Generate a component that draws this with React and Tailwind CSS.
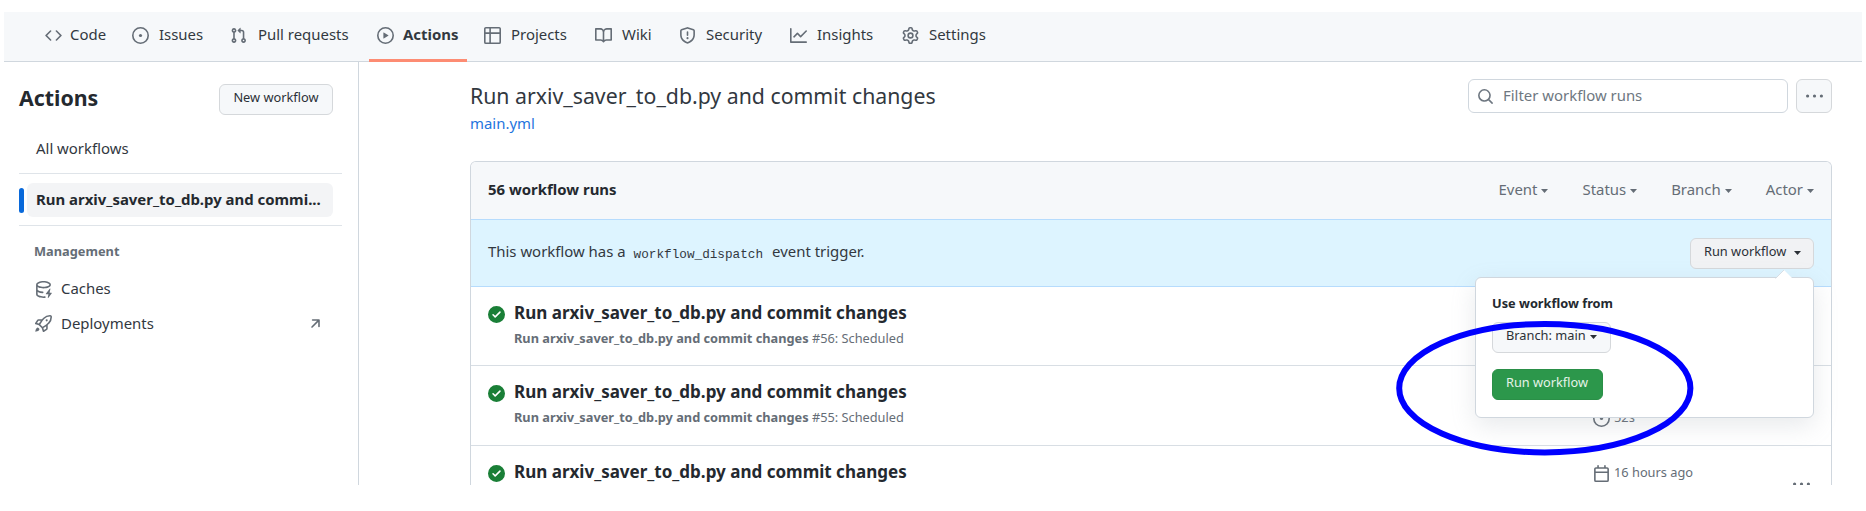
import React from "react";

const PATHS = {
  code: ["m11.28 3.22 4.25 4.25a.75.75 0 0 1 0 1.06l-4.25 4.25a.749.749 0 0 1-1.275-.326.749.749 0 0 1 .215-.734L13.94 8l-3.72-3.72a.749.749 0 0 1 .326-1.275.749.749 0 0 1 .734.215Zm-6.56 0a.751.751 0 0 1 1.042.018.751.751 0 0 1 .018 1.042L2.06 8l3.72 3.72a.749.749 0 0 1-.326 1.275.749.749 0 0 1-.734-.215L.47 8.53a.75.75 0 0 1 0-1.06Z"],
  issue: [
    "M8 9.5a1.5 1.5 0 1 0 0-3 1.5 1.5 0 0 0 0 3Z",
    "M8 0a8 8 0 1 1 0 16A8 8 0 0 1 8 0ZM1.5 8a6.5 6.5 0 1 0 13 0 6.5 6.5 0 0 0-13 0Z",
  ],
  pull: ["M1.5 3.25a2.25 2.25 0 1 1 3 2.122v5.256a2.251 2.251 0 1 1-1.5 0V5.372A2.25 2.25 0 0 1 1.5 3.25Zm5.677-.177L9.573.677A.25.25 0 0 1 10 .854V2.5h1A2.5 2.5 0 0 1 13.5 5v5.628a2.251 2.251 0 1 1-1.5 0V5a1 1 0 0 0-1-1h-1v1.646a.25.25 0 0 1-.427.177L7.177 3.427a.25.25 0 0 1 0-.354ZM3.75 2.5a.75.75 0 1 0 0 1.5.75.75 0 0 0 0-1.5Zm0 9.5a.75.75 0 1 0 0 1.5.75.75 0 0 0 0-1.5Zm8.25.75a.75.75 0 1 0 1.5 0 .75.75 0 0 0-1.5 0Z"],
  play: ["M8 0a8 8 0 1 1 0 16A8 8 0 0 1 8 0ZM1.5 8a6.5 6.5 0 1 0 13 0 6.5 6.5 0 0 0-13 0Zm4.879-2.773 4.264 2.559a.25.25 0 0 1 0 .428l-4.264 2.559A.25.25 0 0 1 6 10.559V5.442a.25.25 0 0 1 .379-.215Z"],
  table: ["M0 1.75C0 .784.784 0 1.75 0h12.5C15.216 0 16 .784 16 1.75v12.5A1.75 1.75 0 0 1 14.25 16H1.75A1.75 1.75 0 0 1 0 14.25ZM6.5 6.5v8h7.75a.25.25 0 0 0 .25-.25V6.5Zm8-1.5V1.75a.25.25 0 0 0-.25-.25H6.5V5Zm-13 1.5v7.75c0 .138.112.25.25.25H5v-8ZM5 5V1.5H1.75a.25.25 0 0 0-.25.25V5Z"],
  book: ["M0 1.75A.75.75 0 0 1 .75 1h4.253c1.227 0 2.317.59 3 1.501A3.743 3.743 0 0 1 11.006 1h4.245a.75.75 0 0 1 .75.75v10.5a.75.75 0 0 1-.75.75h-4.507a2.25 2.25 0 0 0-1.591.659l-.622.621a.75.75 0 0 1-1.06 0l-.622-.621A2.25 2.25 0 0 0 5.258 13H.75a.75.75 0 0 1-.75-.75Zm7.251 10.324.004-5.073-.002-2.253A2.25 2.25 0 0 0 5.003 2.5H1.5v9h3.757a3.75 3.75 0 0 1 1.994.574ZM8.755 4.75l-.004 7.322a3.752 3.752 0 0 1 1.992-.572H14.5v-9h-3.495a2.25 2.25 0 0 0-2.25 2.25Z"],
  shield: ["M7.467.133a1.748 1.748 0 0 1 1.066 0l5.25 1.68A1.75 1.75 0 0 1 15 3.48V7c0 1.566-.32 3.182-1.303 4.682-.983 1.498-2.585 2.813-5.032 3.855a1.697 1.697 0 0 1-1.33 0c-2.447-1.042-4.049-2.357-5.032-3.855C1.32 10.182 1 8.566 1 7V3.48a1.75 1.75 0 0 1 1.217-1.667Zm.61 1.429a.25.25 0 0 0-.153 0l-5.25 1.68a.25.25 0 0 0-.174.238V7c0 1.358.275 2.666 1.057 3.86.784 1.194 2.121 2.34 4.366 3.297a.196.196 0 0 0 .154 0c2.245-.956 3.582-2.104 4.366-3.298C13.225 9.666 13.5 8.36 13.5 7V3.48a.251.251 0 0 0-.174-.237l-5.25-1.68ZM8.75 4.75v3a.75.75 0 0 1-1.5 0v-3a.75.75 0 0 1 1.5 0ZM9 10.5a1 1 0 1 1-2 0 1 1 0 0 1 2 0Z"],
  graph: ["M1.5 1.75V13.5h13.75a.75.75 0 0 1 0 1.5H.75a.75.75 0 0 1-.75-.75V1.75a.75.75 0 0 1 1.5 0Zm14.28 2.53-5.25 5.25a.75.75 0 0 1-1.06 0L7 7.06 4.28 9.78a.751.751 0 0 1-1.042-.018.751.751 0 0 1-.018-1.042l3.25-3.25a.75.75 0 0 1 1.06 0L10 7.94l4.72-4.72a.751.751 0 0 1 1.042.018.751.751 0 0 1 .018 1.042Z"],
  gear: ["M8 0a8.2 8.2 0 0 1 .701.031C9.444.095 9.99.645 10.16 1.29l.288 1.107c.018.066.079.158.212.224.231.114.454.243.668.386.123.082.233.09.299.071l1.103-.303c.644-.176 1.392.021 1.82.63.27.385.506.792.704 1.218.315.675.111 1.422-.364 1.891l-.814.806c-.049.048-.098.147-.088.294.016.257.016.515 0 .772-.01.147.038.246.088.294l.814.806c.475.469.679 1.216.364 1.891a7.977 7.977 0 0 1-.704 1.217c-.428.61-1.176.807-1.82.63l-1.102-.302c-.067-.019-.177-.011-.3.071a5.909 5.909 0 0 1-.668.386c-.133.066-.194.158-.211.224l-.29 1.106c-.168.646-.715 1.196-1.458 1.26a8.006 8.006 0 0 1-1.402 0c-.743-.064-1.289-.614-1.458-1.26l-.289-1.106c-.018-.066-.079-.158-.212-.224a5.738 5.738 0 0 1-.668-.386c-.123-.082-.233-.09-.299-.071l-1.103.303c-.644.176-1.392-.021-1.82-.63a8.12 8.12 0 0 1-.704-1.218c-.315-.675-.111-1.422.363-1.891l.815-.806c.05-.048.098-.147.088-.294a6.214 6.214 0 0 1 0-.772c.01-.147-.038-.246-.088-.294l-.815-.806C.635 6.045.431 5.298.746 4.623a7.92 7.92 0 0 1 .704-1.217c.428-.61 1.176-.807 1.82-.63l1.102.302c.067.019.177.011.3-.071.214-.143.437-.272.668-.386.133-.066.194-.158.211-.224l.29-1.106C6.009.645 6.556.095 7.299.03 7.53.01 7.764 0 8 0Zm-.571 1.525c-.036.003-.108.036-.137.146l-.289 1.105c-.147.561-.549.967-.998 1.189-.173.086-.34.183-.5.29-.417.278-.97.423-1.529.27l-1.103-.303c-.109-.03-.175.016-.195.045-.22.312-.412.644-.573.99-.014.031-.021.11.059.19l.815.806c.411.406.562.957.53 1.456a4.709 4.709 0 0 0 0 .582c.032.499-.119 1.05-.53 1.456l-.815.806c-.081.08-.073.159-.059.19.162.346.353.677.573.989.02.03.085.076.195.046l1.102-.303c.56-.153 1.113-.008 1.53.27.161.107.328.204.501.29.447.222.85.629.997 1.189l.289 1.105c.029.109.101.143.137.146a6.6 6.6 0 0 0 1.142 0c.036-.003.108-.036.137-.146l.289-1.105c.147-.561.549-.967.998-1.189.173-.086.34-.183.5-.29.417-.278.97-.423 1.529-.27l1.103.303c.109.029.175-.016.195-.045.22-.313.411-.644.573-.99.014-.031.021-.11-.059-.19l-.815-.806c-.411-.406-.562-.957-.53-1.456a4.709 4.709 0 0 0 0-.582c-.032-.499.119-1.05.53-1.456l.815-.806c.081-.08.073-.159.059-.19a6.464 6.464 0 0 0-.573-.989c-.02-.03-.085-.076-.195-.046l-1.102.303c-.56.153-1.113.008-1.53-.27a4.44 4.44 0 0 0-.501-.29c-.447-.222-.85-.629-.997-1.189l-.289-1.105c-.029-.11-.101-.143-.137-.146a6.6 6.6 0 0 0-1.142 0ZM11 8a3 3 0 1 1-6 0 3 3 0 0 1 6 0ZM9.5 8a1.5 1.5 0 1 0-3.001.001A1.5 1.5 0 0 0 9.5 8Z"],
  search: ["M10.68 11.74a6 6 0 0 1-7.922-8.982 6 6 0 0 1 8.982 7.922l3.04 3.04a.749.749 0 0 1-.326 1.275.749.749 0 0 1-.734-.215ZM11.5 7a4.499 4.499 0 1 0-8.997 0A4.499 4.499 0 0 0 11.5 7Z"],
  check: ["M8 16A8 8 0 1 1 8 0a8 8 0 0 1 0 16Zm3.78-9.72a.751.751 0 0 0-.018-1.042.751.751 0 0 0-1.042-.018L6.75 9.19 5.28 7.72a.751.751 0 0 0-1.042.018.751.751 0 0 0-.018 1.042l2 2a.75.75 0 0 0 1.06 0Z"],
  calendar: ["M4.75 0a.75.75 0 0 1 .75.75V2h5V.75a.75.75 0 0 1 1.5 0V2h1.25c.966 0 1.75.784 1.75 1.75v10.5A1.75 1.75 0 0 1 13.25 16H2.75A1.75 1.75 0 0 1 1 14.25V3.75C1 2.784 1.784 2 2.75 2H4V.75A.75.75 0 0 1 4.75 0ZM2.5 7.5v6.75c0 .138.112.25.25.25h10.5a.25.25 0 0 0 .25-.25V7.5Zm10.75-4H2.75a.25.25 0 0 0-.25.25V6h11V3.75a.25.25 0 0 0-.25-.25Z"],
  rocket: ["M14.064 0h.186C15.216 0 16 .784 16 1.75v.186a8.752 8.752 0 0 1-2.564 6.186l-.458.459c-.314.314-.641.616-.979.904v3.207c0 .608-.315 1.172-.833 1.49l-2.774 1.707a.749.749 0 0 1-1.11-.418l-.954-3.102a1.214 1.214 0 0 1-.145-.125L3.754 9.816a1.218 1.218 0 0 1-.124-.145L.528 8.717a.749.749 0 0 1-.418-1.11l1.71-2.774A1.748 1.748 0 0 1 3.31 4h3.204c.288-.338.59-.665.904-.979l.459-.458A8.749 8.749 0 0 1 14.064 0ZM8.938 3.623h-.002l-.458.458c-.76.76-1.437 1.598-2.02 2.5l-1.5 2.317 2.143 2.143 2.317-1.5c.902-.583 1.74-1.26 2.499-2.02l.459-.458a7.25 7.25 0 0 0 2.123-5.127V1.75a.25.25 0 0 0-.25-.25h-.186a7.249 7.249 0 0 0-5.125 2.123ZM3.56 14.56c-.732.732-2.334 1.045-3.005 1.148a.234.234 0 0 1-.201-.064.234.234 0 0 1-.064-.201c.103-.671.416-2.273 1.15-3.003a1.502 1.502 0 1 1 2.12 2.12Zm6.94-3.935c-.088.06-.177.118-.266.175l-2.35 1.521.548 1.783 1.949-1.2a.25.25 0 0 0 .119-.213ZM3.678 8.116 5.2 5.766c.058-.09.117-.178.176-.266H3.309a.25.25 0 0 0-.213.119l-1.2 1.95ZM12 5a1 1 0 1 1-2 0 1 1 0 0 1 2 0Z"],
  cache: [
    "M2.5 5.724V8c0 .248.238.7 1.169 1.159.874.43 2.144.745 3.62.822a.75.75 0 1 1-.078 1.498c-1.622-.085-3.102-.432-4.204-.975a5.565 5.565 0 0 1-.507-.28V12.5c0 .133.058.318.282.551.227.237.591.483 1.101.707 1.015.447 2.47.742 4.117.742.406 0 .802-.018 1.183-.052a.751.751 0 1 1 .134 1.494C8.89 15.98 8.45 16 8 16c-1.805 0-3.475-.32-4.721-.869-.623-.274-1.173-.619-1.579-1.041-.408-.425-.7-.964-.7-1.59v-9c0-.626.292-1.165.7-1.591.406-.42.956-.766 1.579-1.04C4.525.32 6.195 0 8 0c1.806 0 3.476.32 4.721.869.623.274 1.173.619 1.579 1.041.408.425.7.964.7 1.59 0 .626-.292 1.165-.7 1.591-.406.42-.956.766-1.579 1.04C11.475 6.68 9.805 7 8 7c-1.805 0-3.475-.32-4.721-.869a6.15 6.15 0 0 1-.779-.407Zm0-2.224c0 .133.058.318.282.551.227.237.591.483 1.101.707C4.898 5.205 6.353 5.5 8 5.5c1.646 0 3.101-.295 4.118-.742.508-.224.873-.471 1.1-.708.224-.232.282-.417.282-.55 0-.133-.058-.318-.282-.551-.227-.237-.591-.483-1.101-.707C11.102 1.795 9.647 1.5 8 1.5c-1.646 0-3.101.295-4.118.742-.508.224-.873.471-1.1.708-.224.232-.282.417-.282.55Z",
    "M14.49 7.582a.375.375 0 0 0-.66-.313l-3.625 4.625a.375.375 0 0 0 .295.606h2.127l-.619 2.922a.375.375 0 0 0 .666.304l3.125-4.125A.375.375 0 0 0 15.5 11h-1.778l.769-3.418Z",
  ],
  arrow: ["M4.53 4.75A.75.75 0 0 1 5.28 4h6.01a.75.75 0 0 1 .75.75v6.01a.75.75 0 0 1-1.5 0v-4.2l-5.26 5.261a.749.749 0 0 1-1.275-.326.749.749 0 0 1 .215-.734L9.48 5.5h-4.2a.75.75 0 0 1-.75-.75Z"],
  kebab: ["M8 9a1.5 1.5 0 1 0 0-3 1.5 1.5 0 0 0 0 3ZM1.5 9a1.5 1.5 0 1 0 0-3 1.5 1.5 0 0 0 0 3Zm13 0a1.5 1.5 0 1 0 0-3 1.5 1.5 0 0 0 0 3Z"],
};

function Icon({ name, className = "" }) {
  return (
    <svg viewBox="0 0 16 16" fill="currentColor" className={"size-[17px] shrink-0 " + className}>
      {PATHS[name].map((d) => (
        <path key={d} d={d} />
      ))}
    </svg>
  );
}

function Caret({ className = "" }) {
  return (
    <svg viewBox="0 0 14 8" fill="currentColor" className={"h-1 w-[7px] shrink-0 " + className}>
      <path d="M0 0h14L7 8Z" />
    </svg>
  );
}

const TABS = [
  { label: "Code", icon: "code", size: "w-[87px]", gap: "ml-2" },
  { label: "Issues", icon: "issue", size: "w-[98px]", gap: "ml-[10px]" },
  { label: "Pull requests", icon: "pull", size: "w-[147px]", gap: "ml-[11px]" },
  { label: "Actions", icon: "play", size: "w-[107px]", gap: "ml-[9px]", active: true },
  { label: "Projects", icon: "table", size: "w-[111px]", gap: "ml-[10px]" },
  { label: "Wiki", icon: "book", size: "w-[84px]", gap: "ml-[10px]" },
  { label: "Security", icon: "shield", size: "w-[111px]", gap: "ml-[10px]" },
  { label: "Insights", icon: "graph", size: "w-[112px]", gap: "ml-[10px]" },
  { label: "Settings", icon: "gear", size: "w-[110px]", gap: "ml-[10px]" },
];

function Tab({ label, icon, size, gap, active }) {
  return (
    <a className={"relative flex h-full items-center " + size}>
      <Icon name={icon} className="mt-[3px] text-[#656d76]" />
      <span className={gap + (active ? " font-bold" : "")}>{label}</span>
      {active && <span className="absolute -bottom-[6px] -left-2 h-[3px] w-[98px] bg-[#fd8c73]" />}
    </a>
  );
}

const TITLE = "Run arxiv_saver_to_db.py and commit changes";

function Run({ number, size, children }) {
  return (
    <div className={"flex shrink-0 items-start border-[#d8dee4] pl-[17px] " + size}>
      <Icon name="check" className="mt-[19px] text-[#1a7f37]" />
      <div className="ml-[9px] w-[1079px] pt-[14px]">
        <div className="text-[17.03px] leading-6 font-bold">{TITLE}</div>
        {number && (
          <div className="mt-px text-[12.77px] leading-6 text-[#656d76]">
            <span className="font-bold">{TITLE}</span> #{number}: Scheduled
          </div>
        )}
      </div>
      {children}
    </div>
  );
}

function Filter({ label, gap }) {
  return (
    <span className={"flex items-center " + gap}>
      {label}
      <Caret className="mt-1 ml-1" />
    </span>
  );
}

const BUTTON = "flex items-start rounded-md border border-[#d5d8db] text-[12.8px] text-[#2b3037] ";

export default function App() {
  return (
    <div className="relative h-[511px] w-[1866px] overflow-hidden bg-white pt-3 font-['Noto_Sans',sans-serif] text-[14.93px] leading-[22px] whitespace-nowrap text-[#24292f]">
      <div className="ml-1 flex h-[473px] w-[1858px] flex-col overflow-hidden">
        <nav className="flex h-[50px] shrink-0 border-b border-[#d0d7de] bg-[#f6f8fa] pb-[5px] pl-[41px] text-[#32383f]">
          {TABS.map((t) => (
            <Tab key={t.label} {...t} />
          ))}
        </nav>

        <div className="flex min-h-0 flex-1">
          <aside className="w-[355px] shrink-0 border-r border-[#d0d7de] pl-[15px]">
            <div className="flex items-start justify-between pt-[22px] pr-[25px]">
              <h1 className="text-[21.33px] leading-7 font-bold">Actions</h1>
              <button className={BUTTON + "h-[31px] w-[114px] justify-center bg-[#f6f8fa] leading-[24px]"}>New workflow</button>
            </div>
            <div className="mt-[22px] pl-[17px] text-[#32383f]">All workflows</div>
            <div className="mt-[14px] mr-[16px] h-px bg-[#dfe4e9]" />
            <div className="mt-[9px] flex h-[34px] items-center">
              <div className="h-[25px] w-[5px] rounded-md bg-[#0969da]" />
              <div className="ml-[3px] h-full w-[306px] rounded-md bg-[#f3f4f6] pt-[5px] pl-[9px] font-bold">
                Run arxiv_saver_to_db.py and commi...
              </div>
            </div>
            <div className="mt-2 mr-[16px] h-px bg-[#dfe4e9]" />
            <div className="mt-[14px] pl-[15px] text-[12.8px] font-bold text-[#656d76]">Management</div>
            <div className="mt-[15px] flex items-center pl-4">
              <Icon name="cache" className="mt-0.5 text-[#656d76]" />
              <span className="ml-[9px] text-[#32383f]">Caches</span>
            </div>
            <div className="mt-[13px] flex items-center pr-[34px] pl-4">
              <Icon name="rocket" className="mt-px text-[#656d76]" />
              <span className="ml-[9px] flex-1 text-[#32383f]">Deployments</span>
              <Icon name="arrow" className="mt-px text-[#656d76]" />
            </div>
          </aside>

          <main className="ml-[111px] flex w-[1362px] flex-col">
            <div className="flex h-[99px] shrink-0 items-start pt-[17px]">
              <div className="flex-1 pt-[2px]">
                <h2 className="text-[21.28px] leading-[29px] text-[#32383f]">{TITLE}</h2>
                <a className="mt-[2px] block text-[#1f75de]">main.yml</a>
              </div>
              <div className="flex h-[34px] w-[320px] items-center rounded-md border border-[#d0d7de] pb-0.5 pl-2 text-[#6e7781]">
                <Icon name="search" className="mt-0.5" />
                <span className="ml-[9px]">Filter workflow runs</span>
              </div>
              <button className="ml-2 flex h-[34px] w-9 items-center justify-center rounded-md border border-[#d5d8db] bg-[#f6f8fa] text-[#656d76]">
                <Icon name="kebab" />
              </button>
            </div>

            <div className="flex min-h-0 flex-1 flex-col overflow-hidden rounded-t-md border border-b-0 border-[#d0d7de]">
              <div className="flex h-[57px] shrink-0 items-center justify-between bg-[#f6f8fa] pr-[17px] pb-1 pl-[17px]">
                <span className="font-bold">56 workflow runs</span>
                <div className="flex text-[#656d76]">
                  <Filter label="Event" gap="" />
                  <Filter label="Status" gap="ml-[34px]" />
                  <Filter label="Branch" gap="ml-[34px]" />
                  <Filter label="Actor" gap="ml-[34px]" />
                </div>
              </div>
              <div className="flex h-[68px] shrink-0 items-start justify-between border-y border-[#b6dcfd] bg-[#ddf4ff] px-[17px]">
                <div className="mt-5 text-[#32383f]">
                  This workflow has a
                  <code className="relative top-px mr-[9px] ml-2 font-['Liberation_Mono',monospace] text-[12.7px]">workflow_dispatch</code>
                  event trigger.
                </div>
                <button className={BUTTON + "mt-[18px] h-[31px] w-[124px] bg-[#f1f2f4] pl-[13px] leading-[25px]"}>
                  Run workflow
                  <Caret className="mt-[12px] ml-2" />
                </button>
              </div>
              <Run number={56} size="h-[79px] border-b" />
              <Run number={55} size="h-20 border-b">
                <div className="flex items-center pt-10 text-[12.8px] text-[#656d76]">
                  <Icon name="issue" className="mt-0.5" />
                  <span className="ml-1">52s</span>
                </div>
              </Run>
              <Run size="h-10">
                <div className="flex w-[200px] items-center pt-[15px] text-[12.8px] text-[#656d76]">
                  <Icon name="calendar" className="mt-[3px]" />
                  <span className="ml-1">16 hours ago</span>
                </div>
                <Icon name="kebab" className="mt-[30px] text-[#656d76]" />
              </Run>
            </div>
          </main>
        </div>
      </div>

      {/* Dispatch menu opened from the banner button */}
      <div className="absolute top-[277px] left-[1475px] h-[141px] w-[339px] rounded-md border border-[#d0d7de] bg-white pt-[15px] pl-4 text-[12.75px] shadow-[0_8px_24px_rgba(140,149,159,0.2)]">
        <svg viewBox="0 0 18 9" className="absolute -top-[8px] right-5 h-[9px] w-[18px]">
          <path d="M0 9 9 0l9 9Z" fill="#fff" />
          <path d="M0.5 8.5 9 0" stroke="#d0d7de" strokeWidth="0.8" />
        </svg>
        <div className="leading-[20px] font-bold">Use workflow from</div>
        <button className={BUTTON + "mt-[9px] h-[31px] w-[119px] bg-[#f6f8fa] pl-[13px] leading-[25px]"}>
          Branch: main
          <Caret className="mt-[12px] ml-1" />
        </button>
        <button className="mt-4 flex h-[31px] w-[111px] items-start rounded-md border border-[#2a8f47] bg-[#2c974b] pl-[13px] leading-[25px] text-[#e4f3e8]">
          Run workflow
        </button>
      </div>

      {/* Highlight ring drawn over the menu */}
      <svg viewBox="0 0 300 136" fill="none" className="absolute top-[320px] left-[1395px] h-[136px] w-[300px]">
        <ellipse cx="149.8" cy="68.2" rx="145.6" ry="64.2" stroke="#0000ff" strokeWidth="6" />
      </svg>
    </div>
  );
}
